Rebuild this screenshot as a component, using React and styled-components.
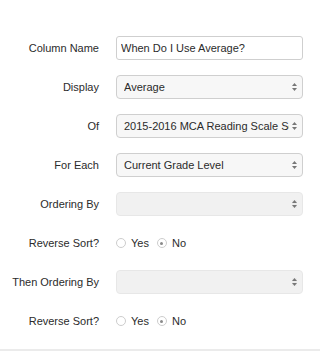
import React from "react";
import styled, { createGlobalStyle } from "styled-components";

const GlobalStyle = createGlobalStyle`
  html, body {
    margin: 0;
    padding: 0;
    background: #fff;
  }
  body {
    font-family: "Liberation Sans", Arial, sans-serif;
    font-size: 11px;
    color: #2b2b2b;
  }
`;

const Page = styled.div`
  width: 320px;
  height: 351px;
  box-sizing: border-box;
  display: flex;
  flex-direction: column;
  justify-content: space-between;
`;

const Form = styled.form`
  display: flex;
  flex-direction: column;
  gap: 15px;
  padding-top: 36px;
`;

const Row = styled.div`
  display: grid;
  grid-template-columns: 99px 187px;
  column-gap: 17px;
  height: 24px;
  align-items: center;
`;

const Label = styled.label`
  text-align: right;
  white-space: nowrap;
  color: #2b2b2b;
`;

const TextInput = styled.input`
  box-sizing: border-box;
  width: 100%;
  height: 24px;
  margin: 0;
  padding: 0 4px;
  border: 1px solid #cfcfcf;
  border-radius: 3px;
  background: #fff;
  font-family: inherit;
  font-size: 11px;
  color: #2b2b2b;
  outline: none;
`;

const SelectWrap = styled.div`
  position: relative;
  height: 24px;
`;

const Select = styled.select`
  box-sizing: border-box;
  appearance: none;
  -webkit-appearance: none;
  width: 100%;
  height: 24px;
  margin: 0;
  padding: 0 12px 0 7px;
  border: 1px solid ${(p) => (p.disabled ? "#dedede" : "#cfcfcf")};
  border-radius: 4px;
  background: ${(p) => (p.disabled ? "#ececec" : "#f7f7f7")};
  font-family: inherit;
  font-size: 11px;
  color: #2b2b2b;
  outline: none;
  white-space: nowrap;
  overflow: hidden;
  text-overflow: clip;
`;

const Arrows = styled.svg`
  position: absolute;
  right: 6px;
  top: 8px;
  pointer-events: none;
  background: #f7f7f7;
  box-shadow: -3px 0 0 #f7f7f7;
`;

const RadioGroup = styled.div`
  display: flex;
  align-items: center;
  gap: 8px;
`;

const RadioOption = styled.span`
  display: flex;
  align-items: center;
  gap: 5px;
`;

const RadioCircle = styled.span`
  box-sizing: border-box;
  width: 10px;
  height: 10px;
  border-radius: 50%;
  border: 1px solid #cdcdcd;
  background: #fff;
  display: flex;
  align-items: center;
  justify-content: center;

  &::after {
    content: "";
    width: 3px;
    height: 3px;
    border-radius: 50%;
    background: ${(p) => (p.checked ? "#8a8a8a" : "transparent")};
  }
`;

const Footer = styled.div`
  height: 2px;
  background: #ebebeb;
`;

const SelectArrows = ({ disabled }) => (
  <Arrows
    width="5"
    height="8"
    viewBox="0 0 5 8"
    style={disabled ? { background: "#ececec", boxShadow: "none" } : undefined}
  >
    <path d="M2.5 0 L5 3 L0 3 Z" fill="#777" />
    <path d="M2.5 8 L5 5 L0 5 Z" fill="#777" />
  </Arrows>
);

const SelectField = ({ value, disabled }) => (
  <SelectWrap>
    <Select disabled={disabled} defaultValue={value || ""}>
      <option value={value || ""}>{value || ""}</option>
    </Select>
    <SelectArrows disabled={disabled} />
  </SelectWrap>
);

const ReverseSort = () => (
  <RadioGroup>
    <RadioOption>
      <RadioCircle />
      Yes
    </RadioOption>
    <RadioOption>
      <RadioCircle checked />
      No
    </RadioOption>
  </RadioGroup>
);

const App = () => (
  <>
    <GlobalStyle />
    <Page>
      <Form>
        <Row>
          <Label>Column Name</Label>
          <TextInput defaultValue="When Do I Use Average?" />
        </Row>
        <Row>
          <Label>Display</Label>
          <SelectField value="Average" />
        </Row>
        <Row>
          <Label>Of</Label>
          <SelectField value="2015-2016 MCA Reading Scale Score" />
        </Row>
        <Row>
          <Label>For Each</Label>
          <SelectField value="Current Grade Level" />
        </Row>
        <Row>
          <Label>Ordering By</Label>
          <SelectField disabled />
        </Row>
        <Row>
          <Label>Reverse Sort?</Label>
          <ReverseSort />
        </Row>
        <Row>
          <Label>Then Ordering By</Label>
          <SelectField disabled />
        </Row>
        <Row>
          <Label>Reverse Sort?</Label>
          <ReverseSort />
        </Row>
      </Form>
      <Footer />
    </Page>
  </>
);

export default App;
